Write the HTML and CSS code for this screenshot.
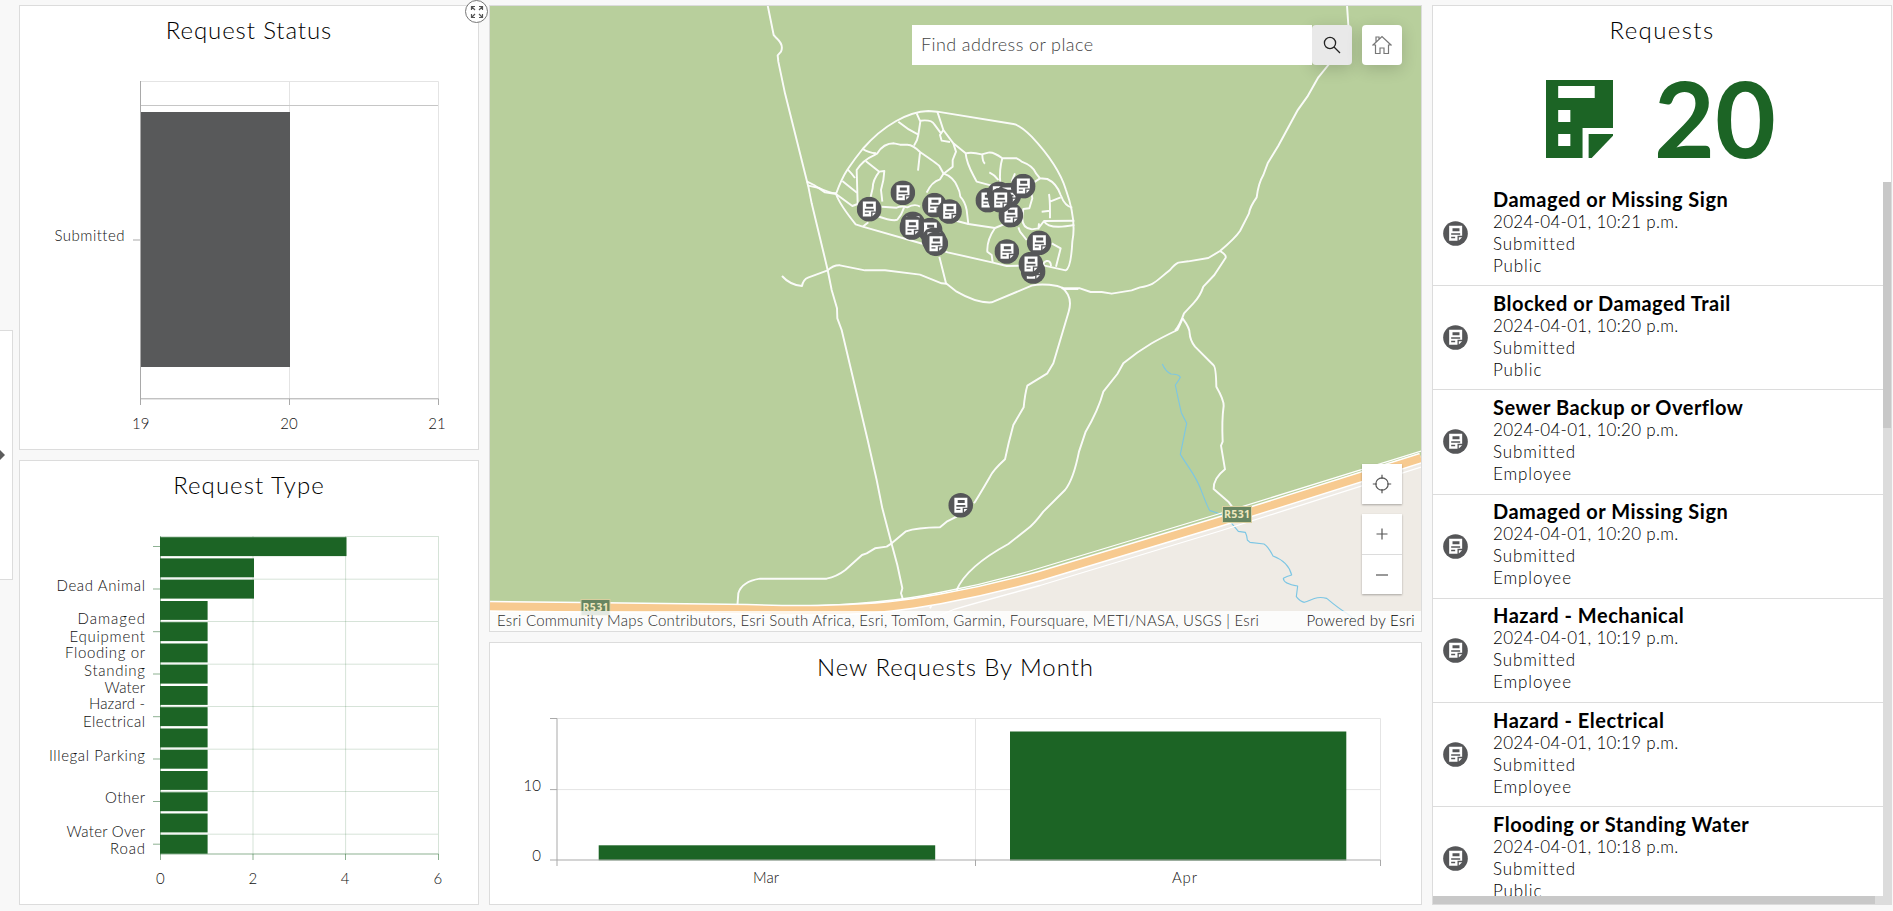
FILE: index.html
```html
<!DOCTYPE html>
<html lang="en">
<head>
<meta charset="utf-8">
<title>Requests</title>
<link rel="stylesheet" href="styles.css">
</head>
<body>
<svg class="defs" width="0" height="0" aria-hidden="true">
  <symbol id="marker" viewBox="-37.5 -37.5 75 75">
    <circle r="37" fill="#555658"/>
    <path fill="#fff" fill-rule="evenodd" d="M-19-23H20V7H6V22H-19Z M-9-16V-7H12V-16Z M-13-1V4H14V-1Z M-13 10V14H-1V10Z"/>
    <path fill="#fff" d="M10 11H20L10 21Z"/>
  </symbol>
</svg>
<main class="dashboard">
  <aside class="flyout"><svg width="6" height="12" viewBox="0 0 6 12"><path d="M0 1L5 6L0 11Z" fill="#5c5c5c"/></svg></aside>

  <div class="column side">
    <section class="panel">
      <h2 class="title t-status">Request Status</h2>
      <svg class="chart" viewBox="20 61 458 388">
        <g class="grid"><path d="M141 81.5H438.5V399M289.5 81.5V399"/></g>
        <path d="M141 105.5H438" stroke="#c6c6c6"/>
        <rect x="140" y="112" width="150" height="255" fill="#58595a"/>
        <path class="axis" d="M140.5 81V405M140 398.8H438.5V405M289.5 399V405M133 240H140"/>
        <g class="label">
          <text x="124.5" y="241.3" text-anchor="end" textLength="70">Submitted</text>
          <g text-anchor="middle"><text x="140.7" y="429">19</text><text x="289" y="429">20</text><text x="437" y="429">21</text></g>
        </g>
      </svg>
      <button class="expand"><svg width="22" height="22" viewBox="0 0 22 22"><g fill="none" stroke="#555" stroke-width="1.2"><path d="M5.5 9V5.5H9M5.5 5.5L9 9M13 5.5H16.5V9M16.5 5.5L13 9M5.5 13V16.5H9M5.5 16.5L9 13M16.5 13V16.5H13M16.5 16.5L13 13"/></g></svg></button>
    </section>
    <section class="panel">
      <h2 class="title t-type">Request Type</h2>
      <svg class="chart" viewBox="20 516 458 388">
        <g stroke="#1c6425" fill="none">
          <path opacity=".18" d="M161 536.5H438.5V854M253 536V854M345.6 536V854M161 579.2H438M161 621.5H438M161 664.2H438M161 706.5H438M161 749.2H438M161 791.5H438M161 834.2H438"/>
          <path opacity=".5" d="M160.5 536V860M160 854H438.5V860M253 854V860M345.5 854V860M153 546.5H160M153 589H160M153 631.7H160M153 674H160M153 716.7H160M153 759H160M153 801.5H160M153 844.2H160"/>
        </g>
        <g fill="#1c6425">
          <rect x="160" y="537.2" width="186.5" height="18.9"/><rect x="160" y="558.4" width="94" height="18.9"/><rect x="160" y="579.7" width="94" height="18.9"/>
          <rect x="160" y="601" width="47.6" height="18.9"/><rect x="160" y="622.2" width="47.6" height="18.9"/><rect x="160" y="643.5" width="47.6" height="18.9"/><rect x="160" y="664.7" width="47.6" height="18.9"/>
          <rect x="160" y="686" width="47.6" height="18.9"/><rect x="160" y="707.2" width="47.6" height="18.9"/><rect x="160" y="728.5" width="47.6" height="18.9"/><rect x="160" y="749.8" width="47.6" height="18.9"/>
          <rect x="160" y="771" width="47.6" height="18.9"/><rect x="160" y="792.3" width="47.6" height="18.9"/><rect x="160" y="813.5" width="47.6" height="18.9"/><rect x="160" y="834.8" width="47.6" height="18.9"/>
        </g>
        <g class="label">
          <g text-anchor="end">
            <text x="145" y="591" textLength="88.5">Dead Animal</text>
            <text x="145" y="624" textLength="67.5">Damaged</text><text x="145" y="642" textLength="75.5">Equipment</text>
            <text x="145" y="658" textLength="80">Flooding or</text><text x="145" y="676" textLength="61">Standing</text><text x="145" y="693.2" textLength="40.5">Water</text>
            <text x="145" y="709" textLength="56">Hazard -</text><text x="145" y="727" textLength="62">Electrical</text>
            <text x="145" y="761" textLength="96">Illegal Parking</text><text x="145" y="803" textLength="40">Other</text>
            <text x="145" y="837" textLength="78.5">Water Over</text><text x="145" y="854" textLength="35">Road</text>
          </g>
          <g text-anchor="middle"><text x="160.3" y="884">0</text><text x="252.8" y="884">2</text><text x="345" y="884">4</text><text x="437.8" y="884">6</text></g>
        </g>
      </svg>
    </section>
  </div>

  <div class="column centre">
    <section class="panel map">
      <svg class="basemap" viewBox="490 6 931 625">
        <rect x="490" y="6" width="931" height="625" fill="#b8cf9c"/>
        <path fill="#efebe5" d="M490 606L747 609C830 613 880 610 940 600Q990 592 1040 577L1220 521L1421 458V631H490Z"/>
        <g class="stream" transform="translate(940 280) scale(.33333)">
          <path d="M667 252Q677 275 693 282Q717 282 721 292Q715 304 706 315Q713 350 724 398L740 430L721 523C750 570 770 590 785 635Q806 690 810 692L832 699L860 712L880 736L895 754L916 757Q922 770 922 780L930 787L972 792Q985 800 999 828Q1045 845 1055 885Q1040 889 1030 895Q1030 912 1073 918L1069 950Q1080 965 1093 967C1120 958 1130 948 1160 955C1180 972 1195 985 1222 1001Q1250 1020 1254 1050"/>
        </g>
        <g class="road" transform="translate(480 0) scale(.33333)">
          <path d="M863 16L881 105L890 115Q912 135 903 155L893 166L895 185L915 280L985 560L995 610L1030 755L1043 810L1055 870L1071 925L1072 955L1085 990L1163 1320L1190 1440L1207 1525L1224 1590L1235 1632L1252 1695L1267 1765L1263 1780L1270 1802"/>
          <path d="M985 557L1018 564Q1045 578 1068 580"/>
          <path d="M906 828Q930 855 966 858Q970 838 984 833L1043 811Q1060 795 1080 796L1155 811H1215L1320 824L1385 850L1400 851"/>
          <path d="M772 1820L775 1780Q785 1745 840 1736H1040Q1070 1730 1096 1710L1146 1665L1160 1660L1185 1645L1220 1640L1235 1630L1278 1594Q1310 1583 1380 1582L1400 1565L1430 1550"/>
        </g>
        <g class="road" transform="translate(820 90) scale(.33333)">
          <path d="M48 312Q65 265 83 238Q105 205 128 177C190 105 265 65 325 63L352 65L580 102Q600 105 635 140Q715 225 738 300Q770 390 757 455Q753 535 737 541L670 526L560 528L516 517L383 487L310 462L128 410L107 403Q60 345 48 312Z"/>
          <path d="M48 312L97 348L113 342L110 240Q130 210 160 197L172 190Q190 160 222 160L240 164L262 164Q280 165 300 186Q350 220 358 228L370 250Q400 260 412 290Q420 305 421 320Q435 335 440 360L445 402L525 414L595 385"/>
          <path d="M128 177Q145 188 168 190M83 238Q95 250 105 264M67 273L111 308M137 213L178 245L193 243Q192 270 183 300L187 335M178 245Q158 270 158 295L152 320"/>
          <path d="M235 95Q265 120 295 134L301 95L290 70M295 134L291 150L282 167M301 92Q335 88 343 103L363 130M352 65L370 120L360 135L365 152L390 156M370 120L400 160L437 190Q455 185 485 193L505 188Q520 185 547 205H590Q600 210 605 215Q640 228 648 250L660 265L682 267Q710 280 722 315Q735 350 757 353"/>
          <path d="M400 160L408 185L398 210V230L370 252L360 268Q335 275 320 308M300 188L294 242M437 190C440 225 455 245 470 275L515 287M547 205Q537 240 541 280M487 193Q487 215 495 221M508 247Q525 255 535 270M585 250L575 275"/>
          <path d="M185 350L230 353Q245 347 262 352Q285 340 300 350M170 378Q220 395 232 389Q245 375 252 353M128 410L145 397M388 387L445 402M525 414Q500 450 502 485L515 495L518 517M595 412L600 425L620 450M660 265L630 285L637 325L628 355L610 357L607 380Q605 415 635 418L655 415M655 415L672 393L763 392M672 393Q685 420 763 405M687 312Q690 330 690 362L665 365M690 335L722 322M690 362V385M657 400L655 418M695 460L722 475L708 530M672 526C665 515 693 502 693 528"/>
          <path d="M-40 274L-18 285L15 307L48 312M358 500L378 580L410 605Q470 640 515 637L635 587Q665 580 712 588Q725 592 733 597H775"/>
        </g>
        <g class="road" transform="translate(1060 0) scale(.33333)">
          <path d="M861 16L865 75Q855 120 805 195L775 232L742 290L712 332L655 437L623 490L610 525Q595 550 590 592Q570 620 567 640L540 693Q525 715 480 753L445 774L385 784L355 788Q345 792 330 810C285 845 285 855 240 862L215 871L155 881L125 876H92L60 865H5"/>
          <path d="M480 753Q500 765 497 773L463 825L430 860Q420 890 400 910L372 940Q360 975 345 992"/>
        </g>
        <g class="road" transform="translate(940 280) scale(.33333)">
          <path d="M365 22Q400 50 386 95L340 250L322 280L262 317Q255 340 251 382L220 435Q205 490 195 538Q160 570 150 590Q115 650 102 670"/>
          <path d="M728 115Q715 145 712 150C660 175 610 200 550 250L532 282L490 335Q475 390 437 455L417 515Q400 600 375 630L310 695Q280 735 262 747L205 792Q80 860 50 930"/>
          <path d="M728 115Q750 145 749 160Q750 180 765 200L820 255Q828 260 829 320Q852 360 851 378Q845 420 848 485L843 497L855 568Q820 595 821 627L865 665L880 685"/>
          <path d="M-22 968L-30 985"/>
        </g>
        <g fill="none">
          <path stroke="#fff" stroke-width="11" d="M490 606.3L582 607.3L747 609.3Q850 613 913 603.5L940 599Q990 590 1040 576L1220 521.5L1421 458"/>
          <path stroke="#fff" stroke-width="1.3" d="M800 606Q880 605 940 592.5Q990 583.3 1040 568L1220 513.5L1421 451M900 631L955 609Q990 599 1040 585.5L1220 531L1421 467"/>
          <path stroke="#f7ca90" stroke-width="8" d="M490 606.3L582 607.3L747 609.3Q850 613 913 603.5L940 599Q990 590 1040 576L1220 521.5L1421 458"/>
        </g>
        <g class="shield">
          <rect x="581" y="599.5" width="29" height="16"/><text x="595.5" y="611" text-anchor="middle" textLength="26">R531</text>
          <rect x="1222.5" y="506.5" width="29" height="16"/><text x="1237" y="518" text-anchor="middle" textLength="26">R531</text>
        </g>
        <g transform="translate(820 90) scale(.33333)">
          <use href="#marker" x="211" y="271" width="75" height="75"/><use href="#marker" x="110" y="320" width="75" height="75"/>
          <use href="#marker" x="306" y="308" width="75" height="75"/><use href="#marker" x="351" y="327" width="75" height="75"/>
          <use href="#marker" x="241" y="364" width="75" height="75"/><use href="#marker" x="293" y="383" width="75" height="75"/>
          <use href="#marker" x="238" y="375" width="75" height="75"/><use href="#marker" x="304" y="412" width="75" height="75"/>
          <use href="#marker" x="310" y="424" width="75" height="75"/><use href="#marker" x="466" y="293" width="75" height="75"/>
          <use href="#marker" x="535" y="338" width="75" height="75"/><use href="#marker" x="500" y="274" width="75" height="75"/>
          <use href="#marker" x="529" y="278" width="75" height="75"/><use href="#marker" x="504" y="293" width="75" height="75"/>
          <use href="#marker" x="572" y="251" width="75" height="75"/><use href="#marker" x="523" y="447" width="75" height="75"/>
          <use href="#marker" x="602" y="507" width="75" height="75"/><use href="#marker" x="620" y="421" width="75" height="75"/>
          <use href="#marker" x="595" y="485" width="75" height="75"/>
        </g>
        <use href="#marker" x="948.2" y="492.8" width="25" height="25"/>
      </svg>
      <div class="map-top">
        <div class="search"><span class="placeholder">Find address or place</span></div>
        <button class="tool search-go"><svg width="18" height="18" viewBox="0 0 18 18" fill="none" stroke="#222" stroke-width="1.3"><circle cx="7" cy="7" r="5.6"/><path d="M11 11L17 17"/></svg></button>
        <button class="tool home"><svg width="20" height="20" viewBox="0 0 20 20" fill="none" stroke="#777" stroke-width="1.2"><path d="M1 10L10 1.5L19 10H16.5V18.5H12V13H8V18.5H3.5V10ZM4 7V2H7V4"/></svg></button>
      </div>
      <div class="map-tools">
        <button class="tool square"><svg width="20" height="20" viewBox="0 0 20 20" fill="none" stroke="#555" stroke-width="1.2"><circle cx="10" cy="10" r="6.2"/><path d="M10 .8V5M10 15V19.2M.8 10H5M15 10H19.2"/></svg></button>
        <div class="zoom">
          <button class="tool square flat"><svg width="12" height="12" viewBox="0 0 12 12" stroke="#555" stroke-width="1.2"><path d="M.5 6H11.5M6 .5V11.5"/></svg></button>
          <button class="tool square flat"><svg width="12" height="12" viewBox="0 0 12 12" stroke="#555" stroke-width="1.2"><path d="M0 6H12"/></svg></button>
        </div>
      </div>
      <div class="attribution">
        <span class="sources">Esri Community Maps Contributors, Esri South Africa, Esri, TomTom, Garmin, Foursquare, METI/NASA, USGS | Esri</span>
        <span class="powered">Powered by <b>Esri</b></span>
      </div>
    </section>
    <section class="panel month">
      <h2 class="title t-month">New Requests By Month</h2>
      <svg class="chart" viewBox="490 698 931 206">
        <g class="grid"><path d="M557 718.5H1380.5V860M975.5 718.5V860M557 789.6H1380"/></g>
        <g fill="#1c6425"><rect x="598.7" y="845.3" width="336.5" height="15"/><rect x="1010" y="731.5" width="336.3" height="129"/></g>
        <path class="axis" d="M550 718.5H557V866M550 789.6H557M550 860H1380.5V866M975.5 860V866"/>
        <g class="label">
          <g text-anchor="end"><text x="541" y="791">10</text><text x="541" y="861">0</text></g>
          <g text-anchor="middle"><text x="766" y="883" textLength="26">Mar</text><text x="1184.5" y="883" textLength="25">Apr</text></g>
        </g>
      </svg>
    </section>
  </div>

  <div class="column side">
    <section class="panel requests">
      <h2 class="title t-requests">Requests</h2>
      <div class="indicator">
        <svg width="67" height="78" viewBox="0 0 11 13" preserveAspectRatio="none" fill="#1c6425"><path fill-rule="evenodd" d="M0 0H11V8H6V13H0Z M2 1V3H8V1Z M2 5V7H4V5Z M2 9V11H4V9Z"/><path d="M7 9H11V9.3L7.5 13H7Z"/></svg>
        <strong class="count">20</strong>
      </div>
      <div class="scroller">
        <ul class="list">
          <li class="item"><svg class="pin"><use href="#marker"/></svg><div class="text"><h3 class="name">Damaged or Missing Sign</h3><p class="date">2024-04-01, 10:21 p.m.</p><p>Submitted</p><p>Public</p></div></li>
          <li class="item"><svg class="pin"><use href="#marker"/></svg><div class="text"><h3 class="name">Blocked or Damaged Trail</h3><p class="date">2024-04-01, 10:20 p.m.</p><p>Submitted</p><p>Public</p></div></li>
          <li class="item"><svg class="pin"><use href="#marker"/></svg><div class="text"><h3 class="name">Sewer Backup or Overflow</h3><p class="date">2024-04-01, 10:20 p.m.</p><p>Submitted</p><p>Employee</p></div></li>
          <li class="item"><svg class="pin"><use href="#marker"/></svg><div class="text"><h3 class="name">Damaged or Missing Sign</h3><p class="date">2024-04-01, 10:20 p.m.</p><p>Submitted</p><p>Employee</p></div></li>
          <li class="item"><svg class="pin"><use href="#marker"/></svg><div class="text"><h3 class="name">Hazard - Mechanical</h3><p class="date">2024-04-01, 10:19 p.m.</p><p>Submitted</p><p>Employee</p></div></li>
          <li class="item"><svg class="pin"><use href="#marker"/></svg><div class="text"><h3 class="name">Hazard - Electrical</h3><p class="date">2024-04-01, 10:19 p.m.</p><p>Submitted</p><p>Employee</p></div></li>
          <li class="item"><svg class="pin"><use href="#marker"/></svg><div class="text"><h3 class="name">Flooding or Standing Water</h3><p class="date">2024-04-01, 10:18 p.m.</p><p>Submitted</p><p>Public</p></div></li>
        </ul>
        <div class="track-y"><div class="thumb-y"></div></div>
        <div class="track-x"><div class="thumb-x"></div></div>
      </div>
    </section>
  </div>
</main>
</body>
</html>
```
FILE: styles.css
```css
* { box-sizing: border-box; }
body { margin: 0; background: #f8f8f8; font-family: Lato, "Open Sans", sans-serif; font-weight: 300; font-variant-ligatures: none; color: #000; overflow: hidden; }
.defs { position: absolute; }
.dashboard { position: relative; display: grid; grid-template-columns: 460px 933px 460px; gap: 10px; height: 911px; padding: 5px 1px 6px 19px; }
.column { display: grid; gap: 10px; min-height: 0; }
.side { grid-auto-rows: 1fr; }
.centre { grid-template-rows: 627px 263px; }
.panel { position: relative; display: flex; flex-direction: column; min-height: 0; background: #fff; border: 1px solid #dcdcdc; }
.title { flex: none; height: 55px; margin: 0; padding-top: 9px; text-align: center; font-size: 24px; line-height: 30px; font-weight: 300; white-space: nowrap; }
.t-status { letter-spacing: .9px; }
.t-type { letter-spacing: 1.05px; }
.t-month { letter-spacing: .95px; }
.t-requests { letter-spacing: 1.4px; }
.chart { display: block; flex: 1; min-height: 0; width: 100%; }
.grid { fill: none; stroke: #e4e4e4; }
.axis { fill: none; stroke: #a9a9a9; }
.label { font-size: 15px; fill: #101010; }
.flyout { position: absolute; left: -1px; top: 330px; width: 14px; height: 250px; display: flex; align-items: center; background: #fff; border: 1px solid #dcdcdc; }
.expand { position: absolute; right: -10px; top: -6px; z-index: 2; width: 23px; height: 23px; padding: 0; border: 1px solid #777; border-radius: 50%; background: #fff; display: grid; place-items: center; }

.basemap { position: absolute; inset: 0; width: 931px; height: 625px; }
.road { fill: none; stroke: #fff; stroke-width: 5.8; stroke-linejoin: round; opacity: .93; }
.stream { fill: none; stroke: #7cc6e4; stroke-width: 3.4; stroke-linejoin: round; }
.shield rect { fill: #678561; stroke: #d8cf9f; }
.shield text { font: 700 10.5px "Open Sans", sans-serif; fill: #efe7bd; }
.map-top { position: relative; display: flex; padding: 19px 19px 0; justify-content: flex-end; }
.search { position: relative; z-index: 1; width: 400px; height: 40px; padding-left: 9px; background: #fff; line-height: 38px; font-size: 18px; letter-spacing: .4px; color: #444; }
.tool { display: grid; place-items: center; width: 40px; height: 40px; padding: 0; border: 0; border-radius: 4px; background: #fff; box-shadow: 0 4px 16px rgba(0,0,0,.16); }
.search-go { background: #e9e9e9; }
.home { margin-left: 10px; }
.map-tools { position: relative; display: flex; flex-direction: column; align-items: flex-end; gap: 10px; margin-top: auto; padding: 0 19px 17px 0; }
.square { border-radius: 0; box-shadow: 0 1px 2px rgba(0,0,0,.3); }
.flat { box-shadow: none; }
.zoom { background: #fff; box-shadow: 0 1px 2px rgba(0,0,0,.3); }
.flat + .flat { border-top: 1px solid #dcdcdc; }
.attribution { position: relative; display: flex; justify-content: space-between; height: 20px; padding: 0 6px 0 7px; background: rgba(255,255,255,.82); font-size: 15px; line-height: 18px; white-space: nowrap; color: #2c2c2c; }
.sources { letter-spacing: .25px; }
.powered { letter-spacing: .33px; color: #111; }
.powered b { font-weight: 300; color: #000; }

.indicator { flex: none; display: flex; height: 121px; padding: 19px 0 0 113px; }
.count { margin-left: 41px; font-size: 105px; line-height: 75px; font-weight: 700; color: #1c6425; }
.scroller { flex: 1; min-height: 0; display: grid; grid-template: minmax(0, 1fr) 8px / 450px 8px; }
.list { margin: 0; padding: 0; list-style: none; overflow: hidden; }
.item { display: flex; align-items: center; height: 104.2px; padding-left: 10px; border-bottom: 1px solid #dcdcdc; }
.pin { width: 25px; height: 25px; margin-right: 25px; }
.text { padding-bottom: 4px; }
.name { margin: 0; font-size: 20px; line-height: 24px; font-weight: 700; letter-spacing: .5px; color: #000; white-space: nowrap; }
.text p { margin: 0; font-size: 17px; line-height: 22px; letter-spacing: .9px; }
.text .date { letter-spacing: .3px; }
.track-y { grid-row: 1 / 3; grid-column: 2; background: #dcdcdc; }
.thumb-y { height: 246px; background: #c8c8c8; }
.track-x { grid-row: 2; grid-column: 1; background: #dcdcdc; }
.thumb-x { width: 442px; height: 8px; background: #c8c8c8; }
```
